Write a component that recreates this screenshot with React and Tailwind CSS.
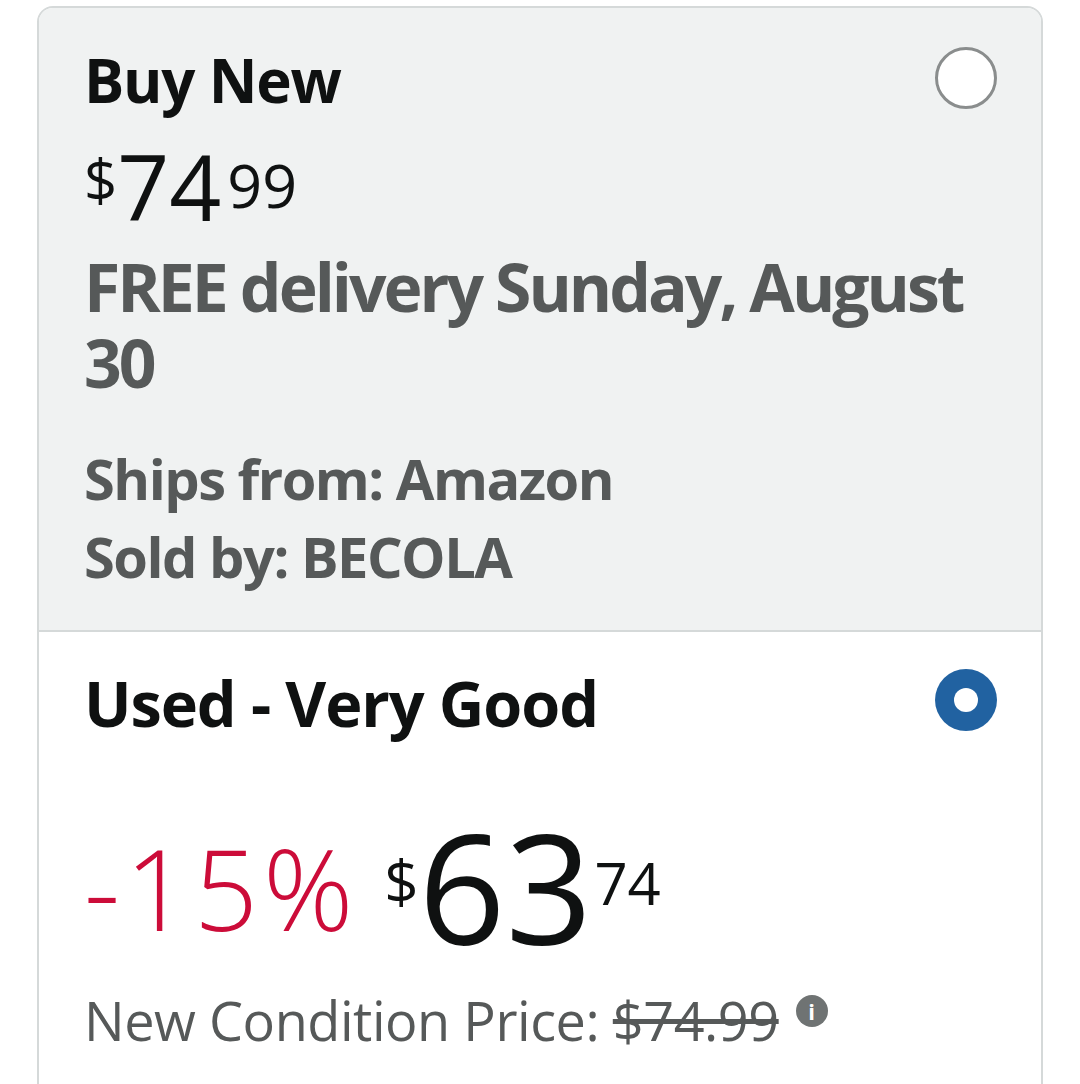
export default function App() {
  const font = { fontFamily: '"Open Sans", "Noto Sans", sans-serif' };
  return (
    <div className="min-h-[1084px] bg-white overflow-hidden" style={font}>
      <div className="ml-[37px] mt-[6px] w-[1006px] rounded-t-[16px] border-2 border-[#d5d9d9] overflow-hidden">
        {/* Buy New option */}
        <div className="grid bg-[#f0f2f2] pl-[45px] pr-[44px] pt-[36px] pb-[35px] border-b-2 border-[#d5d9d9]">
          <div className="col-start-1 row-start-1 flex flex-col">
            <div className="text-[60px] leading-[72px] font-bold tracking-[-1.2px] text-[#0f1111]">Buy New</div>
            <div className="mt-[25px] flex items-start text-[#0f1111] leading-none">
              <span className="mt-[10px] text-[58px] leading-none">$</span>
              <span className="text-[91px] leading-none">74</span>
              <span className="ml-[6px] mt-[13px] text-[61px] leading-none">99</span>
            </div>
            <div className="mt-[16px] text-[66px] leading-[76px] font-bold tracking-[-3px] text-[#565959]">
              FREE delivery Sunday, August 30
            </div>
            <div className="mt-[39px] text-[56px] leading-[78px] font-bold tracking-[-1.5px] text-[#565959]">
              <div>Ships from: Amazon</div>
              <div>Sold by: BECOLA</div>
            </div>
          </div>
          <div className="col-start-1 row-start-1 justify-self-end mt-[3px] h-[62px] w-[62px] rounded-full border-[3px] border-[#8a8d8d] bg-white" />
        </div>

        {/* Used option */}
        <div className="grid bg-white pl-[45px] pr-[44px] pt-[33px] pb-[40px]">
          <div className="col-start-1 row-start-1 flex flex-col">
            <div className="text-[63px] leading-[76px] font-bold tracking-[-1.1px] text-[#0f1111]">Used - Very Good</div>
            <div className="mt-[70px] flex items-start leading-none">
              <span className="mt-[21px] text-[112px] leading-none font-light tracking-[5px] text-[#cc0c39]">-15%</span>
              <span className="ml-[26px] mt-[40px] text-[60px] leading-none text-[#0f1111]">$</span>
              <span className="text-[152px] leading-none text-[#0f1111]">63</span>
              <span className="ml-[2px] mt-[43px] text-[58px] leading-none text-[#0f1111]">74</span>
            </div>
            <div className="mt-[25px] flex items-start text-[54px] leading-[64px] tracking-[-0.45px] text-[#565959]">
              <span>
                New Condition Price: <span className="line-through">$74.99</span>
              </span>
              <span className="ml-[17px] mt-[7px] flex h-[32px] w-[32px] items-center justify-center rounded-full bg-[#6f7373] text-[22px] font-bold leading-none tracking-normal text-white">
                i
              </span>
            </div>
          </div>
          <div className="col-start-1 row-start-1 justify-self-end mt-[4px] flex h-[62px] w-[62px] items-center justify-center rounded-full bg-[#2162a1]">
            <div className="h-[24px] w-[24px] rounded-full bg-white" />
          </div>
        </div>
      </div>
    </div>
  );
}
